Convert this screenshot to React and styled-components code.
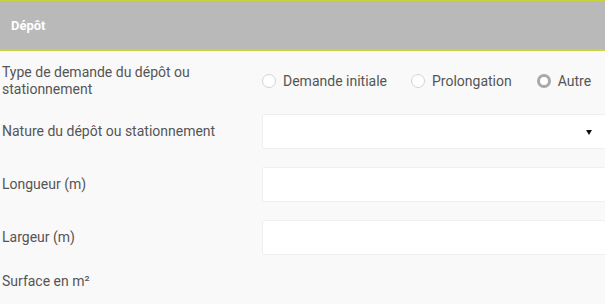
import React from 'react';
import styled, { createGlobalStyle } from 'styled-components';

const GlobalStyle = createGlobalStyle`
  html, body {
    margin: 0;
    padding: 0;
    background: #f9f9f9;
    overflow: hidden;
  }
  body {
    font-family: Roboto, "Liberation Sans", sans-serif;
    color: #555;
  }
`;

const Page = styled.div`
  width: 620px;
`;

const Header = styled.div`
  height: 48px;
  background: #b9b9b9;
  border-top: 1px solid #c9d43b;
  border-bottom: 2px solid #c9d43b;
  display: flex;
  align-items: center;
  padding-left: 11px;
  color: #fff;
  font-size: 13px;
  font-weight: 700;
`;

const Form = styled.div`
  display: flex;
  flex-direction: column;
  padding-top: 13px;
`;

const Row = styled.div`
  display: grid;
  grid-template-columns: 262px 1fr;
  align-items: center;
  margin-bottom: ${(p) => p.$gap || 18}px;
`;

const Label = styled.div`
  padding-left: 2px;
  font-size: 14px;
  line-height: 17px;
  color: #555;
  max-width: 230px;
`;

const RadioGroup = styled.div`
  display: flex;
  align-items: center;
`;

const RadioOption = styled.label`
  display: flex;
  align-items: center;
  margin-right: ${(p) => p.$spacing}px;
  font-size: 14px;
  color: #555;
`;

const RadioDot = styled.span`
  box-sizing: border-box;
  width: 14px;
  height: 14px;
  border-radius: 50%;
  background: #fff;
  border: ${(p) => (p.$checked ? '3px solid #a9a9a9' : '1px solid #d4d4d4')};
  margin-right: 7px;
`;

const Field = styled.div`
  position: relative;
  box-sizing: border-box;
  height: 35px;
  background: #fff;
  border: 1px solid #efefef;
  border-radius: 2px;
`;

const Caret = styled.span`
  position: absolute;
  left: 323px;
  top: 15px;
  width: 0;
  height: 0;
  border-left: 3.5px solid transparent;
  border-right: 3.5px solid transparent;
  border-top: 5px solid #111;
`;

const radios = [
  { label: 'Demande initiale', spacing: 24, checked: false },
  { label: 'Prolongation', spacing: 25, checked: false },
  { label: 'Autre', spacing: 0, checked: true },
];

const App = () => {
  return (
    <Page>
      <GlobalStyle />
      <Header>Dépôt</Header>
      <Form>
        <Row $gap={16}>
          <Label>Type de demande du dépôt ou stationnement</Label>
          <RadioGroup>
            {radios.map((r) => (
              <RadioOption key={r.label} $spacing={r.spacing}>
                <RadioDot $checked={r.checked} />
                {r.label}
              </RadioOption>
            ))}
          </RadioGroup>
        </Row>
        <Row>
          <Label>Nature du dépôt ou stationnement</Label>
          <Field>
            <Caret />
          </Field>
        </Row>
        <Row>
          <Label>Longueur (m)</Label>
          <Field />
        </Row>
        <Row>
          <Label>Largeur (m)</Label>
          <Field />
        </Row>
        <Row>
          <Label>Surface en m²</Label>
        </Row>
      </Form>
    </Page>
  );
};

export default App;
